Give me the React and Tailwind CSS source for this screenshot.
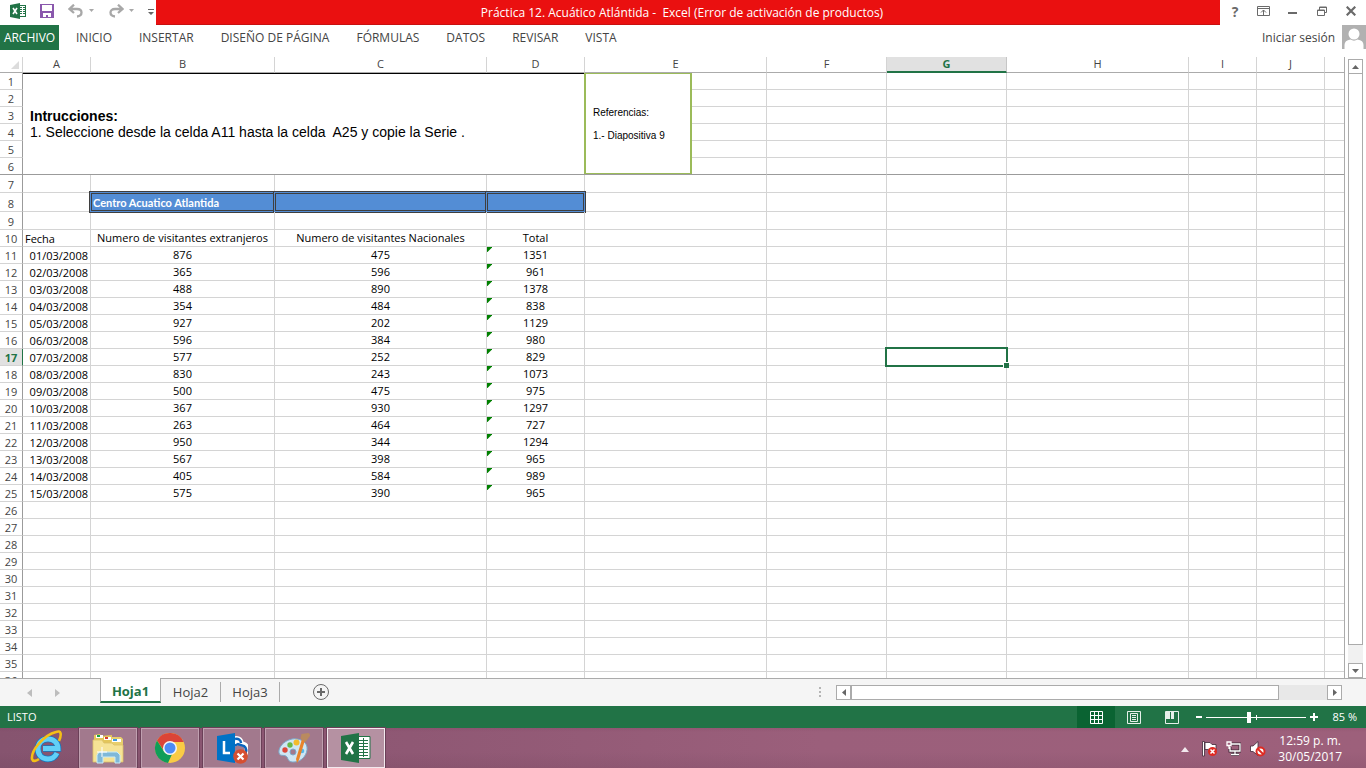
import React from "react";

const columns = ["A", "B", "C", "D", "E", "F", "G", "H", "I", "J", ""];

const visitors = [
  ["01/03/2008", 876, 475, 1351],
  ["02/03/2008", 365, 596, 961],
  ["03/03/2008", 488, 890, 1378],
  ["04/03/2008", 354, 484, 838],
  ["05/03/2008", 927, 202, 1129],
  ["06/03/2008", 596, 384, 980],
  ["07/03/2008", 577, 252, 829],
  ["08/03/2008", 830, 243, 1073],
  ["09/03/2008", 500, 475, 975],
  ["10/03/2008", 367, 930, 1297],
  ["11/03/2008", 263, 464, 727],
  ["12/03/2008", 950, 344, 1294],
  ["13/03/2008", 567, 398, 965],
  ["14/03/2008", 405, 584, 989],
  ["15/03/2008", 575, 390, 965],
];

const ribbonTabs = ["INICIO", "INSERTAR", "DISEÑO DE PÁGINA", "FÓRMULAS", "DATOS", "REVISAR", "VISTA"];

function ExcelBadge() {
  return (
    <svg width="17" height="16" viewBox="0 0 17 16" aria-hidden="true">
      <rect x="8.5" y="2.5" width="7" height="11" fill="#fff" stroke="#217346" />
      <path d="M10 4.5h2M13 4.5h2M10 6.5h2M13 6.5h2M10 8.500h2M13 8.500h2M10 10.500h2M13 10.500h2" stroke="#217346" />
      <path d="M0 2L10 0v16L0 14z" fill="#217346" />
      <path d="M3 5l4 6M7 5l-4 6" stroke="#fff" strokeWidth="1.600" />
    </svg>
  );
}

function TitleBar() {
  return (
    <header className="flex h-[25px] shrink-0">
      <div className="flex w-[156px] shrink-0 items-start text-[#a8a8a8]">
        <span className="ml-[10px] mt-[3px]"><ExcelBadge /></span>
        <button aria-label="Guardar" className="ml-[13px] mt-1">
          <svg width="14" height="14" viewBox="0 0 14 14">
            <path d="M0 0h14v14H0z" fill="#8a58ad" />
            <path d="M2 1h10v6H2zM3 9h8v4H8v-2H6v2H3z" fill="#fff" />
          </svg>
        </button>
        <button aria-label="Deshacer" className="ml-[14px] mt-1">
          <svg width="16" height="14" viewBox="0 0 16 14" fill="none" stroke="currentColor" strokeWidth="2.300">
            <path d="M6 .7L1.500 5l4.500 4M2 5h7c6 0 6 7 0 7.500" />
          </svg>
        </button>
        <span className="ml-1 mt-[9px]"><svg width="7" height="4" viewBox="0 0 7 4" fill="currentColor"><path d="M1 0h5L3.500 3z" /></svg></span>
        <button aria-label="Rehacer" className="ml-[13px] mt-1">
          <svg width="16" height="14" viewBox="0 0 16 14" fill="none" stroke="currentColor" strokeWidth="2.300">
            <path d="M10 .7L14.500 5 10 9M14 5H7c-6 0-6 7 0 7.500" />
          </svg>
        </button>
        <span className="ml-1 mt-[9px]"><svg width="7" height="4" viewBox="0 0 7 4" fill="currentColor"><path d="M1 0h5L3.500 3z" /></svg></span>
        <button aria-label="Personalizar barra" className="ml-[13px] mt-[9px] text-[#666]">
          <svg width="6" height="6" viewBox="0 0 6 6" fill="currentColor"><path d="M0 0h6v1H0zM0 3h6L3 6z" /></svg>
        </button>
      </div>
      <h1 className="flex-1 whitespace-pre border-b border-[#c81010] bg-[#ea1010] pr-3 text-center text-[12px] leading-[25px] text-white">
        {"Práctica 12. Acuático Atlántida -  Excel (Error de activación de productos)"}
      </h1>
      <div className="flex w-[146px] shrink-0 items-start text-[#6a6a6a]">
        <button aria-label="Ayuda" className="ml-[11px] mt-[2px] w-2 text-[14px] font-bold leading-5">?</button>
        <button aria-label="Opciones de presentación" className="ml-[18px] mt-[6px]">
          <svg width="13" height="10" viewBox="0 0 13 10" fill="none" stroke="currentColor">
            <path d="M.5.5h12v9H.5zM0 2.500h13M6.500 9V4M4 6.500L6.500 4 9 6.500" />
          </svg>
        </button>
        <button aria-label="Minimizar" className="ml-[18px] mt-3"><svg width="9" height="2"><rect width="9" height="2" fill="currentColor" /></svg></button>
        <button aria-label="Restaurar" className="ml-5 mt-[6px]">
          <svg width="10" height="10" viewBox="0 0 10 10" fill="none" stroke="currentColor">
            <path d="M.5 4h7v5.500h-7zM2.500 4V1h7v5.500h-2M0 4.500h8M2 1.500h8" />
          </svg>
        </button>
        <button aria-label="Cerrar" className="ml-[19px] mt-[6px]">
          <svg width="10" height="10" viewBox="0 0 10 10" stroke="currentColor" strokeWidth="2.200"><path d="M.7.700l8.600 8.600M9.300.700L.7 9.300" /></svg>
        </button>
      </div>
    </header>
  );
}

function Ribbon() {
  return (
    <nav className="mb-[7px] flex h-[25px] shrink-0 text-[12px] leading-[25px] text-[#444]">
      <button className="w-[59px] bg-[#217346] text-center text-white">ARCHIVO</button>
      <div className="flex gap-[27px] pl-[17px]">
        {ribbonTabs.map((name) => (
          <button key={name} className="whitespace-nowrap">{name}</button>
        ))}
      </div>
      <a href="#cuenta" className="ml-auto mr-[7px]">Iniciar sesión</a>
      <svg width="24" height="24" viewBox="0 0 24 24" aria-hidden="true">
        <path d="M0 0h24v24H0z" fill="#b1b1b1" />
        <circle cx="12" cy="9" r="5.500" fill="#fff" />
        <path d="M2.500 24v-4c0-3 2-5 6-5.500 2 1.500 5 1.500 7 0 4 .5 6 2.500 6 5.500v4z" fill="#fff" />
      </svg>
    </nav>
  );
}

function RowHeader({ n, edge }) {
  const active = n === 17;
  return (
    <th
      scope="row"
      className={
        "border-b border-r p-0 text-center align-bottom leading-[15px] " +
        (active
          ? "border-r-[#217346] bg-[#e1e1e1] font-bold text-[#217346] "
          : "border-r-[#9b9b9b] font-normal text-[#444] ") +
        (edge ? "border-b-[#9b9b9b]" : "border-b-[#d4d4d4]")
      }
    >
      {n}
    </th>
  );
}

const cell = "border-b border-r border-[#d4d4d4] p-0 last:border-r-0 ";

function rowHeight(n) {
  if (n === 7 || n === 9) return "h-[18px]";
  if (n === 8) return "h-[19px]";
  return "h-[17px]";
}

function cellContent(n, c) {
  if (n === 8 && c >= 1 && c <= 3) {
    return (
      <div className="relative h-[18px] border border-[#3f3f3f] bg-[#538dd5] pl-px text-left font-[Lato,sans-serif] text-[11px] font-bold leading-[18px] text-white shadow-[0_0_0_1px_#538dd5,0_0_0_2px_#3f3f3f]">
        {c === 1 ? "Centro Acuatico Atlantida" : ""}
      </div>
    );
  }
  if (n === 10) {
    return ["Fecha", "Numero de visitantes extranjeros", "Numero de visitantes Nacionales", "Total"][c];
  }
  if (n >= 11 && n <= 25 && c < 4) {
    return (
      <>
        {c === 3 && (
          <svg className="absolute left-0 top-0" width="5" height="5" viewBox="0 0 5 5" aria-hidden="true"><path d="M0 0h5.500L0 5.500z" fill="#008000" /></svg>
        )}
        {visitors[n - 11][c]}
      </>
    );
  }
  if (n === 17 && c === 6) {
    return (
      <div className="absolute -left-[2px] -top-[2px] z-10 h-5 w-[123px] border-2 border-[#217346]">
        <span className="absolute -bottom-[3px] -right-[3px] size-[6px] border-l border-t border-white bg-[#217346]" />
      </div>
    );
  }
  return null;
}

function cellAlign(n, c) {
  if (c === 0) return n === 10 ? "pl-[2px] align-bottom leading-[15px]" : "pr-[2px] text-right align-bottom leading-[15px]";
  if (n === 8) return "";
  return "relative text-center align-top leading-[15px]";
}

function BodyRow({ n }) {
  const top = n <= 6;
  const first = top ? 4 : 0;
  return (
    <tr className={rowHeight(n)}>
      <RowHeader n={n} edge={n === 6} />
      {n === 1 && (
        <td colSpan={4} rowSpan={6} className="border-b border-t border-b-[#9b9b9b] border-t-black p-0 pl-[7px] align-middle font-[Liberation_Sans,sans-serif] text-[14px] leading-4">
          <b>Intrucciones:</b>
          <p className="whitespace-pre">{"1. Seleccione desde la celda A11 hasta la celda  A25 y copie la Serie ."}</p>
        </td>
      )}
      {columns.slice(first).map((_, i) => {
        const c = first + i;
        if (top) {
          return (
            <td key={c} className={"relative border-b border-r p-0 border-r-[#d4d4d4] last:border-r-0 " + (n === 6 ? "border-b-[#9b9b9b]" : "border-b-[#d4d4d4]")}>
              {n === 1 && c === 4 && (
                <div className="absolute -left-px top-0 z-10 h-[101px] w-[108px] border-x-2 border-y border-[#9bbb59] bg-white pl-[7px] pt-[27px] font-[Liberation_Sans,sans-serif] text-[10px] leading-[23px]">
                  <p>Referencias:</p>
                  <p>1.- Diapositiva 9</p>
                </div>
              )}
            </td>
          );
        }
        return <td key={c} className={cell + "whitespace-nowrap " + cellAlign(n, c)}>{cellContent(n, c)}</td>;
      })}
    </tr>
  );
}

function Sheet() {
  return (
    <div className="min-w-0 flex-1 overflow-hidden border-r border-[#ababab]">
      <table className="w-full table-fixed border-separate border-spacing-0 text-[11px] text-black">
        <colgroup>
          <col className="w-[23px]" />
          <col className="w-[68px]" />
          <col className="w-[184px]" />
          <col className="w-[212px]" />
          <col className="w-[98px]" />
          <col className="w-[182px]" />
          <col className="w-[120px]" />
          <col className="w-[120px]" />
          <col className="w-[182px]" />
          <col className="w-[68px]" />
          <col className="w-[68px]" />
          <col />
        </colgroup>
        <thead>
          <tr className="h-4">
            <th className="border-b border-r border-b-[#ababab] border-r-[#d4d4d4] p-0">
              <svg className="ml-[11px]" width="9" height="8" viewBox="0 0 9 8" aria-hidden="true"><path d="M8 0v8H0z" fill="#dcdcdc" /></svg>
            </th>
            {columns.map((name, i) => (
              <th
                key={i}
                scope="col"
                className={
                  "border-r p-0 text-center align-top leading-[14px] last:border-r-0 " +
                  (name === "G"
                    ? "border-b-2 border-b-[#217346] border-r-[#c6c6c6] bg-[#e1e1e1] font-bold text-[#217346]"
                    : "border-b border-b-[#ababab] border-r-[#d4d4d4] font-normal text-[#444]")
                }
              >
                {name}
              </th>
            ))}
          </tr>
        </thead>
        <tbody>
          {Array.from({ length: 36 }, (_, i) => <BodyRow key={i} n={i + 1} />)}
        </tbody>
      </table>
    </div>
  );
}

const scrollButton = "flex size-[15px] shrink-0 items-center justify-center border border-[#ababab] bg-white";

function VerticalScroll() {
  return (
    <div className="ml-[3px] mr-[3px] flex w-[15px] shrink-0 flex-col pt-[2px]">
      <button aria-label="Subir" className={scrollButton}><svg width="7" height="4"><path d="M0 4h7L3.500 0z" fill="#666" /></svg></button>
      <div className="-mt-px flex-1 bg-[#f1f1f1]"><div className="h-[97%] border border-[#ababab] bg-white" /></div>
      <button aria-label="Bajar" className={scrollButton}><svg width="7" height="4"><path d="M0 0h7L3.500 4z" fill="#666" /></svg></button>
    </div>
  );
}

function SheetTabs() {
  return (
    <div className="flex h-7 shrink-0 border-t border-[#ababab] bg-[#f5f5f5] text-[13px] text-[#444]">
      <div className="flex w-[100px] items-center gap-[23px] pl-[27px]">
        <button aria-label="Hoja anterior"><svg width="5" height="8"><path d="M5 0v8L0 4z" fill="#bdbdbd" /></svg></button>
        <button aria-label="Hoja siguiente"><svg width="5" height="8"><path d="M0 0v8l5-4z" fill="#bdbdbd" /></svg></button>
      </div>
      <button className="-mt-px h-[25px] w-[61px] border-x border-b-2 border-x-[#ababab] border-b-[#217346] bg-white pt-[3px] font-bold leading-5 text-[#217346]">Hoja1</button>
      <button className="mt-[3px] h-5 w-[60px] border-r border-[#ababab] leading-5">Hoja2</button>
      <button className="mt-[3px] h-5 w-[59px] border-r border-[#ababab] leading-5">Hoja3</button>
      <button aria-label="Hoja nueva" className="ml-8 h-[26px]">
        <svg width="18" height="18" viewBox="0 0 18 18" fill="none" stroke="#6a6a6a">
          <circle cx="9" cy="9" r="7.500" />
          <path d="M9 5v8M5 9h8" strokeWidth="2" />
        </svg>
      </button>
      <div className="ml-auto mr-6 flex w-[523px] items-start pt-[6px]">
        <svg className="mr-[14px] mt-[2px]" width="3" height="12"><path d="M0 0h2v2H0zM0 4h2v2H0zM0 8h2v2H0z" fill="#b5b5b5" /></svg>
        <button aria-label="Izquierda" className={scrollButton}><svg width="4" height="7"><path d="M4 0v7L0 3.500z" fill="#666" /></svg></button>
        <div className="h-[15px] flex-1 bg-[#e8e8e8]"><div className="h-full w-[90%] border border-[#ababab] bg-white" /></div>
        <button aria-label="Derecha" className={scrollButton}><svg width="4" height="7"><path d="M0 0v7l4-3.500z" fill="#666" /></svg></button>
      </div>
    </div>
  );
}

function StatusBar() {
  return (
    <div className="flex h-[22px] shrink-0 items-center bg-[#217346] text-[11px] text-white">
      <span className="ml-[7px]">LISTO</span>
      <button aria-label="Normal" className="ml-auto flex h-full w-[38px] items-center justify-center bg-[#0a6332]">
        <svg width="13" height="13" viewBox="0 0 13 13" fill="none" stroke="#fff"><path d="M.5.5h12v12H.5zM4.500 0v13M8.500 0v13M0 4.500h13M0 8.500h13" /></svg>
      </button>
      <button aria-label="Diseño de página" className="flex h-full w-[38px] items-center justify-center">
        <svg width="14" height="13" viewBox="0 0 14 13" fill="none" stroke="#e6f0ea"><path d="M.5.5h13v12H.5zM3.500 2.500h7v8h-7zM5 4.500h4M5 6.500h4M5 8.500h4" /></svg>
      </button>
      <button aria-label="Vista previa de salto de página" className="flex h-full w-[38px] items-center justify-center">
        <svg width="14" height="13" viewBox="0 0 14 13" fill="none" stroke="#e6f0ea"><path d="M.5.5h13v12H.5z" /><path d="M1 1h4v7H1zM6 1h3v7H6z" fill="#e6f0ea" stroke="none" /></svg>
      </button>
      <button aria-label="Alejar" className="ml-[5px]"><svg width="7" height="2"><rect width="6" height="2" fill="#fff" /></svg></button>
      <div className="relative ml-[3px] flex h-3 w-[100px] items-center">
        <span className="absolute left-[50px] top-1 h-[5px] w-px bg-white" />
        <input
          type="range"
          aria-label="Zoom"
          min="0"
          max="100"
          defaultValue="42"
          className="h-3 w-full appearance-none bg-transparent bg-[linear-gradient(#fff,#fff)] bg-[length:100%_1px] bg-center bg-no-repeat [&::-webkit-slider-thumb]:h-[11px] [&::-webkit-slider-thumb]:w-1 [&::-webkit-slider-thumb]:appearance-none [&::-webkit-slider-thumb]:bg-white"
        />
      </div>
      <button aria-label="Acercar" className="ml-1"><svg width="8" height="8"><path d="M4 0v8M0 4h8" stroke="#fff" strokeWidth="2" /></svg></button>
      <span className="ml-[14px] mr-[9px] whitespace-nowrap">85 %</span>
    </div>
  );
}

function ExplorerIcon() {
  return (
    <svg width="32" height="32" viewBox="0 0 32 32">
      <path d="M2 3l6-1 1 2 11-1v25L2 30z" fill="#e3c65a" />
      <path d="M4 3h7v3H4z" fill="#fff" /><path d="M5 3h3v2H5z" fill="#1aa34a" />
      <path d="M12 5h7v3h-7z" fill="#fff" /><path d="M13 5h3v2h-3z" fill="#d8412f" />
      <path d="M19 5h10l2 2v22l-12 1z" fill="#e8cf6c" />
      <path d="M20 7h9v3h-9z" fill="#fff" /><path d="M21 7h4v2h-4z" fill="#3b9be0" />
      <path d="M1 8h9l2 3h8l2 2h9v17H1z" fill="#f6e395" stroke="#dcc068" strokeWidth=".8" />
      <path d="M5 31V23l2-3h18l3 3v8h-5v-6H11v6z" fill="#7fb8d8" stroke="#c9ecf8" />
      <path d="M10 15v10M5 20h10" stroke="#fff" strokeWidth="1" />
    </svg>
  );
}

function ChromeIcon() {
  return (
    <svg width="32" height="32" viewBox="0 0 32 32">
      <circle cx="16" cy="16" r="15" fill="#f9cb45" />
      <path d="M3 8.500A15 15 0 0 1 29.700 10H16a6.500 6.500 0 0 0-6.200 8.500z" fill="#db4437" />
      <path d="M3 8.500L10.400 20A6.500 6.500 0 0 0 18 22.200L14 31A15 15 0 0 1 3 8.500z" fill="#109d58" />
      <circle cx="16" cy="16" r="7" fill="#f3f5f7" />
      <circle cx="16" cy="16" r="5.500" fill="#4c8bf5" />
    </svg>
  );
}

function LyncIcon() {
  return (
    <svg width="32" height="32" viewBox="0 0 32 32">
      <path d="M18 7c3-1 7 0 7 4M17 13l5-3 7 3c4 3 2 9-1 9h-9" fill="none" stroke="#fff" strokeWidth="5" />
      <path d="M19 7c3-1 6 1 6 4M18 14l4-2 6 2c4 3 2 8-1 8h-8" fill="none" stroke="#0a64bd" strokeWidth="2.500" />
      <path d="M1 4l18-3v30L1 28z" fill="#0072c6" />
      <path d="M8 9v12h6" fill="none" stroke="#fff" strokeWidth="2.500" />
      <circle cx="24.500" cy="24.500" r="7.300" fill="#d64f31" />
      <path d="M21.500 21.500l6 6M27.500 21.500l-6 6" stroke="#fff" strokeWidth="2.200" />
    </svg>
  );
}

function PaintIcon() {
  return (
    <svg width="32" height="32" viewBox="0 0 32 32">
      <path d="M14 7C5 9 0 16 1 21c1 4 6 1 8 4 2 4 2 5 7 5 8 0 14-8 13-15-1-6-8-9-15-8zm1 10a3 3 0 1 1 0 6 3 3 0 0 1 0-6z" fill="#cfe6f4" stroke="#7ba9ca" fillRule="evenodd" />
      <circle cx="7" cy="18" r="2.700" fill="#dc4739" />
      <circle cx="12" cy="13" r="2.700" fill="#67b74a" />
      <circle cx="18.500" cy="10.500" r="3" fill="#f3bb2d" />
      <circle cx="24" cy="19" r="2.300" fill="#55b7e8" />
      <path d="M27 8l-6 20-2 3-1-4 6-20z" fill="#e8842c" />
      <path d="M22.500 6.500l5 3.500 5-7-2-2-7 1z" fill="#b98a5f" />
    </svg>
  );
}

function ExcelIcon() {
  return (
    <svg width="32" height="32" viewBox="0 0 32 32">
      <path d="M18 4.500h12v22H18z" fill="#fff" stroke="#217346" />
      <path d="M19 8.500h9M19 11.500h9M19 14.500h9M19 17.500h9M19 20.500h9M19 23.500h9M23.500 6v19" stroke="#217346" />
      <path d="M1 4l18-3v30L1 28z" fill="#217346" />
      <path d="M6 10l7 12M13 10L6 22" stroke="#fff" strokeWidth="2.600" />
    </svg>
  );
}

function IEIcon() {
  return (
    <svg width="34" height="36" viewBox="0 0 34 36">
      <path d="M27 24c-2 4-5 6-9 6-6 0-10-4-10-10s4-10 10-10 10 4 10 9.500H13" fill="none" stroke="#1577bd" strokeWidth="6.500" />
      <path d="M27 24c-2 4-5 6-9 6-6 0-10-4-10-10s4-10 10-10 10 4 10 9.500H13" fill="none" stroke="#62d0f7" strokeWidth="5" />
      <path d="M29 12C32 5 31 1 26 3 14 6 1 21 2 30c1 3 4 2 7 0" fill="none" stroke="#f4bf16" strokeWidth="2.600" />
    </svg>
  );
}

const apps = [
  ["Explorador de archivos", ExplorerIcon],
  ["Google Chrome", ChromeIcon],
  ["Lync", LyncIcon],
  ["Paint", PaintIcon],
  ["Excel", ExcelIcon],
];

function Taskbar() {
  return (
    <footer className="flex h-10 shrink-0 items-start bg-[linear-gradient(to_bottom,#70305024,transparent_4px,transparent_60%,#5030401c),linear-gradient(to_right,#86546f,#8f5874_30%,#9b5f7b_60%,#9d607b)] text-white">
      <button aria-label="Internet Explorer" className="ml-[30px] mr-[15px] mt-[1px]"><IEIcon /></button>
      <div className="flex gap-1">
        {apps.map(([name, Icon], i) => (
          <button
            key={name}
            aria-label={name}
            className={
              "flex h-10 w-[58px] items-center justify-center border outline outline-1 outline-[#6b4058] " +
              (i === 4 ? "border-[#f3e9ee] bg-[#b591a2]" : "border-[#c0a0b0] bg-[#a2798d]")
            }
          >
            <Icon />
          </button>
        ))}
      </div>
      <div className="ml-auto flex items-start">
        <button aria-label="Mostrar iconos ocultos" className="mr-[13px] mt-[19px]"><svg width="8" height="5"><path d="M0 5h8L4 0z" fill="#f2e9ee" /></svg></button>
        <svg className="mr-2 mt-[13px]" width="16" height="16" viewBox="0 0 16 16" aria-label="Centro de actividades">
          <path d="M.5.500h2V15h-2zM3 1.500h5l2 2h4v6H8l-2-1H3z" fill="#fff" stroke="#402838" strokeWidth=".8" />
          <circle cx="10.500" cy="10.500" r="4.500" fill="#df2a22" />
          <path d="M8.500 8.500l4 4M12.500 8.500l-4 4" stroke="#fff" strokeWidth="1.500" />
        </svg>
        <svg className="mr-[9px] mt-[13px]" width="15" height="16" viewBox="0 0 15 16" fill="none" aria-label="Red">
          <path d="M5 3h9v7H4V6M9 10v3M5 13.500h8" stroke="#402838" strokeWidth="3" />
          <path d="M5 3h9v7H4V6M9 10v3M5 13.500h8M1 1h4v3.500H1zM3 4.500V8" stroke="#fff" strokeWidth="1.300" />
        </svg>
        <svg className="mr-3 mt-[13px]" width="16" height="16" viewBox="0 0 16 16" aria-label="Volumen">
          <path d="M.5 5H3l5-4.500v14L3 10.500H.5z" fill="#fff" stroke="#402838" strokeWidth=".8" />
          <circle cx="10.500" cy="10.500" r="4" fill="#fff" stroke="#df2a22" strokeWidth="2" />
          <path d="M8 8l5 5" stroke="#df2a22" strokeWidth="2" />
        </svg>
        <div className="mr-6 mt-[5px] text-center text-[12px] leading-4">
          <p>12:59 p. m.</p>
          <p>30/05/2017</p>
        </div>
      </div>
    </footer>
  );
}

export default function App() {
  return (
    <div className="flex h-screen flex-col overflow-hidden bg-white font-[Open_Sans,Noto_Sans,sans-serif]">
      <TitleBar />
      <Ribbon />
      <main className="flex min-h-0 flex-1 overflow-hidden">
        <Sheet />
        <VerticalScroll />
      </main>
      <SheetTabs />
      <StatusBar />
      <Taskbar />
    </div>
  );
}
